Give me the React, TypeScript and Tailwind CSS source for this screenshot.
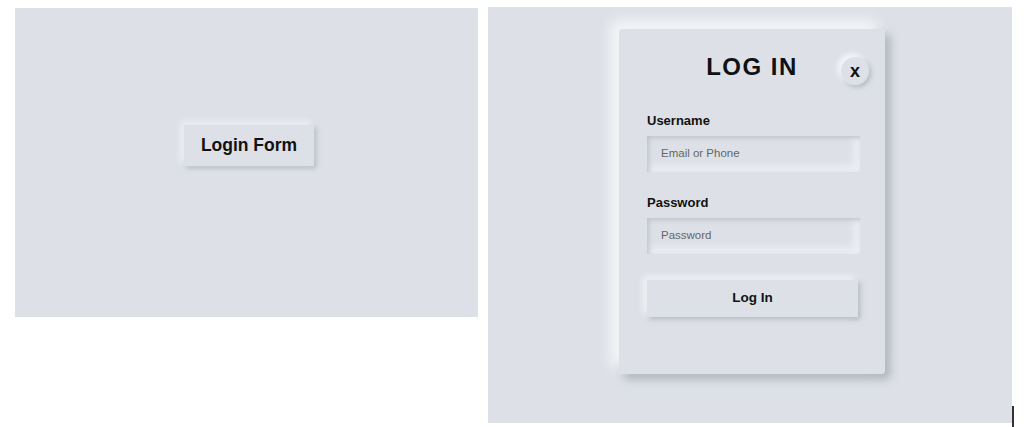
import React from "react";

const font = { fontFamily: '"Liberation Sans", Arial, sans-serif' };

export default function App() {
  return (
    <div className="relative w-[1024px] h-[427px] bg-white overflow-hidden" style={font}>
      <div className="flex items-start">
        {/* Left panel */}
        <div className="ml-[15px] mt-[8px] w-[463px] h-[309px] bg-[#dde1e7] pl-[169px] pt-[117px]">
          <button className="w-[130px] h-[41px] bg-[#dde1e7] text-[17.5px] font-bold text-[#111] shadow-[-3px_-3px_7px_rgba(255,255,255,0.6),2px_2px_5px_rgba(94,104,121,0.35)]">
            Login Form
          </button>
        </div>

        {/* Right panel */}
        <div className="ml-[10px] mt-[7px] w-[524px] h-[416px] bg-[#dde1e7] pl-[131px] pt-[22px]">
          <div className="relative w-[266px] h-[345px] bg-[#dde1e7] rounded-[3px] px-[28px] pt-[23px] shadow-[-8px_-8px_14px_rgba(255,255,255,0.75),5px_5px_10px_rgba(94,104,121,0.4)]">
            <h1 className="text-center text-[24px] leading-[30px] font-bold tracking-[1.5px] text-[#111]">
              LOG IN
            </h1>
            <button className="absolute right-[16px] top-[28px] w-[28px] h-[28px] rounded-full bg-[#dde1e7] flex items-center justify-center text-[18px] leading-none font-bold text-[#111] shadow-[-3px_-3px_6px_rgba(255,255,255,0.8),2px_2px_5px_rgba(94,104,121,0.35)]">
              <span className="-mt-[1px]">x</span>
            </button>

            <div className="mt-[30px] text-[13px] leading-[18px] font-bold text-[#111]">Username</div>
            <div className="mt-[6px] w-[213px] h-[36px] bg-[#dde1e7] pl-[14px] flex items-center text-[11.5px] text-[#666] shadow-[inset_2px_2px_5px_rgba(186,190,204,0.9),inset_-5px_-5px_10px_rgba(255,255,255,0.55)]">
              Email or Phone
            </div>

            <div className="mt-[22px] text-[13px] leading-[18px] font-bold text-[#111]">Password</div>
            <div className="mt-[6px] w-[213px] h-[36px] bg-[#dde1e7] pl-[14px] flex items-center text-[11.5px] text-[#666] shadow-[inset_2px_2px_5px_rgba(186,190,204,0.9),inset_-5px_-5px_10px_rgba(255,255,255,0.55)]">
              Password
            </div>

            <button className="mt-[26px] w-[211px] h-[37px] bg-[#dde1e7] text-[13.5px] font-bold text-[#111] shadow-[-3px_-3px_7px_rgba(255,255,255,0.7),2px_2px_5px_rgba(94,104,121,0.4)]">
              Log In
            </button>
          </div>
        </div>
      </div>
      <div className="absolute left-[1012px] top-[406px] w-[1.5px] h-[21px] bg-[#333]" />
    </div>
  );
}
